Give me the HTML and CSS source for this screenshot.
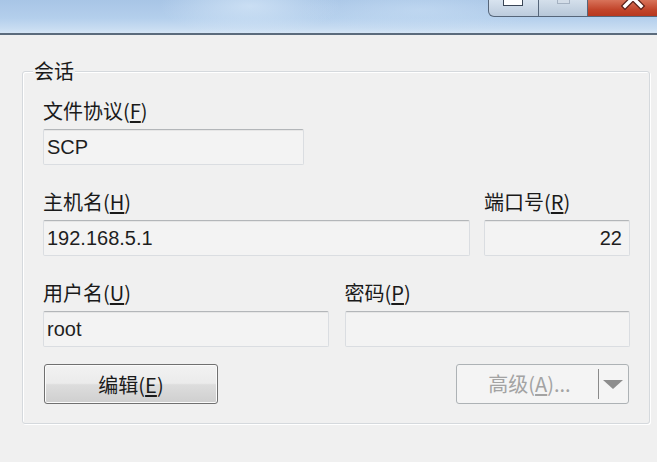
FILE: index.html
```html
<!DOCTYPE html>
<html lang="zh-CN">
<head>
    <meta charset="UTF-8">
    <meta name="viewport" content="width=device-width, initial-scale=1.0">
    <title>会话</title>
    <link rel="stylesheet" href="styles.css">
</head>
<body>
    <div class="titlebar">
        <div class="caption-buttons">
            <div class="cap-btn cap-min"><span class="min-glyph"></span></div>
            <div class="cap-btn cap-max"><span class="max-glyph"></span></div>
            <div class="cap-btn cap-close">
                <svg width="69" height="17" viewBox="0 0 69 17">
                    <path d="M37 -10 L53 6 M53 -10 L37 6" stroke="#5a2018" stroke-width="6" stroke-linecap="square"/>
                    <path d="M37 -10 L53 6 M53 -10 L37 6" stroke="#ffffff" stroke-width="3.5" stroke-linecap="square"/>
                </svg>
            </div>
        </div>
    </div>

    <div class="group">
        <span class="group-title">会话</span>

        <div class="row">
            <div class="field-wrap narrow">
                <div class="label">文件协议(<u>F</u>)</div>
                <div class="field">SCP</div>
            </div>
        </div>

        <div class="row host-row">
            <div class="field-wrap">
                <div class="label">主机名(<u>H</u>)</div>
                <div class="field">192.168.5.1</div>
            </div>
            <div class="field-wrap port">
                <div class="label">端口号(<u>R</u>)</div>
                <div class="field right">22</div>
            </div>
        </div>

        <div class="row user-row">
            <div class="field-wrap">
                <div class="label">用户名(<u>U</u>)</div>
                <div class="field">root</div>
            </div>
            <div class="field-wrap">
                <div class="label">密码(<u>P</u>)</div>
                <div class="field"></div>
            </div>
        </div>

        <div class="buttons">
            <button class="btn">编辑(<u>E</u>)</button>
            <div class="btn split disabled">
                <span class="split-text">高级(<u>A</u>)...</span>
                <span class="split-sep"></span>
                <span class="split-arrow"></span>
            </div>
        </div>
    </div>
</body>
</html>
```

FILE: styles.css
```css
body {
    margin: 0;
    background-color: #f0f0f0;
    font-family: "Noto Sans CJK SC", "Liberation Sans", sans-serif;
    color: #1a1a1a;
    width: 657px;
    height: 462px;
    overflow: hidden;
}

/* window title bar (cropped) */
.titlebar {
    height: 33px;
    border-bottom: 2px solid #5b6b7c;
    background:
        radial-gradient(ellipse 90px 30px at 250px 6px, rgba(215, 232, 248, 0.7), rgba(215, 232, 248, 0) 100%),
        radial-gradient(ellipse 120px 24px at 420px 10px, rgba(200, 222, 244, 0.6), rgba(200, 222, 244, 0) 100%),
        linear-gradient(to bottom, #a8c5e6 0%, #b4cfec 55%, #c9ddf2 88%, #d6e6f6 100%);
    display: flex;
    justify-content: flex-end;
    overflow: hidden;
}
.caption-buttons { display: flex; align-items: flex-start; }
.cap-btn {
    height: 17px;
    border: 1px solid #56667a;
    border-top: none;
    box-sizing: border-box;
    position: relative;
    overflow: hidden;
}
.cap-min {
    width: 51px;
    border-bottom-left-radius: 6px;
    background: linear-gradient(to bottom, #d8e3ef, #bccbdd);
}
.cap-max {
    width: 49px;
    border-left: none;
    background: linear-gradient(to bottom, #d4dfeb, #b7c7d9);
}
.cap-close {
    width: 69px;
    border-left: none;
    border-right: none;
    background: linear-gradient(to bottom, #d8735a, #c2452b 60%, #b7381f);
}
.cap-close svg { display: block; }
.min-glyph {
    position: absolute;
    left: 14px;
    top: -2px;
    width: 20px;
    height: 8px;
    background: #ffffff;
    border: 1px solid #3b4656;
    box-sizing: border-box;
}
.max-glyph {
    position: absolute;
    left: 18px;
    top: -4px;
    width: 13px;
    height: 8px;
    border: 1px solid #a5b2c2;
    background: #d3dde8;
    box-sizing: border-box;
}

/* group box */
.group {
    position: relative;
    margin: 36px 0 0 22px;
    width: 628px;
    height: 353px;
    box-sizing: border-box;
    border: 1px solid #d5d9dd;
    border-radius: 3px;
    box-shadow: 1px 1px 0 #ffffff, inset 1px 1px 0 #ffffff;
    padding: 27px 19px 0 20px;
}
.group-title {
    position: absolute;
    left: 10px;
    top: -13px;
    padding: 0 1px;
    background: #f0f0f0;
    font-size: 20px;
    line-height: 24px;
}

.row + .row { margin-top: 25px; }
.host-row { display: flex; gap: 14px; }
.host-row .field-wrap { flex: 1; }
.host-row .port { flex: 0 0 146px; }
.user-row { display: grid; grid-template-columns: 1fr 1fr; gap: 16px; }
.narrow { width: 261px; }

.label {
    font-size: 20px;
    line-height: 24px;
    margin-bottom: 6px;
    white-space: nowrap;
}
.label u, .btn u { text-underline-offset: 2px; }

.field {
    height: 36px;
    box-sizing: border-box;
    border: 1px solid #dadde1;
    border-top-color: #b3b6b9;
    border-radius: 2px;
    background: #f3f3f3;
    box-shadow: inset 0 1px 0 #e6e6e6;
    font-family: "Liberation Sans", "Noto Sans CJK SC", sans-serif;
    font-size: 20px;
    line-height: 34px;
    padding: 0 7px 0 3px;
    color: #1e1e1e;
}
.field.right { text-align: right; }

/* buttons */
.buttons {
    margin-top: 17px;
    display: flex;
    justify-content: space-between;
    padding-left: 1px;
}
.btn {
    width: 174px;
    height: 40px;
    box-sizing: border-box;
    border: 1px solid #707070;
    border-radius: 3px;
    background: linear-gradient(to bottom, #f2f2f2 0%, #ebebeb 48%, #dddddd 52%, #cfcfcf 100%);
    box-shadow: inset 0 0 0 1px #fbfbfb;
    font-family: "Noto Sans CJK SC", "Liberation Sans", sans-serif;
    font-size: 20px;
    color: #1a1a1a;
    padding: 0;
}
.split {
    width: 173px;
    margin-right: 1px;
    display: flex;
    align-items: center;
}
.split.disabled {
    border-color: #adb2b5;
    background: #f4f4f4;
    box-shadow: none;
    color: #a3a3a3;
}
.split-text {
    flex: 1;
    text-align: center;
    padding-left: 4px;
    line-height: 38px;
}
.split-sep {
    width: 1px;
    height: 30px;
    background: #8a8a8a;
}
.split-arrow {
    width: 0;
    height: 0;
    margin: 0 5px 0 4px;
    border-left: 10px solid transparent;
    border-right: 10px solid transparent;
    border-top: 9px solid #8d8d8d;
}
```
